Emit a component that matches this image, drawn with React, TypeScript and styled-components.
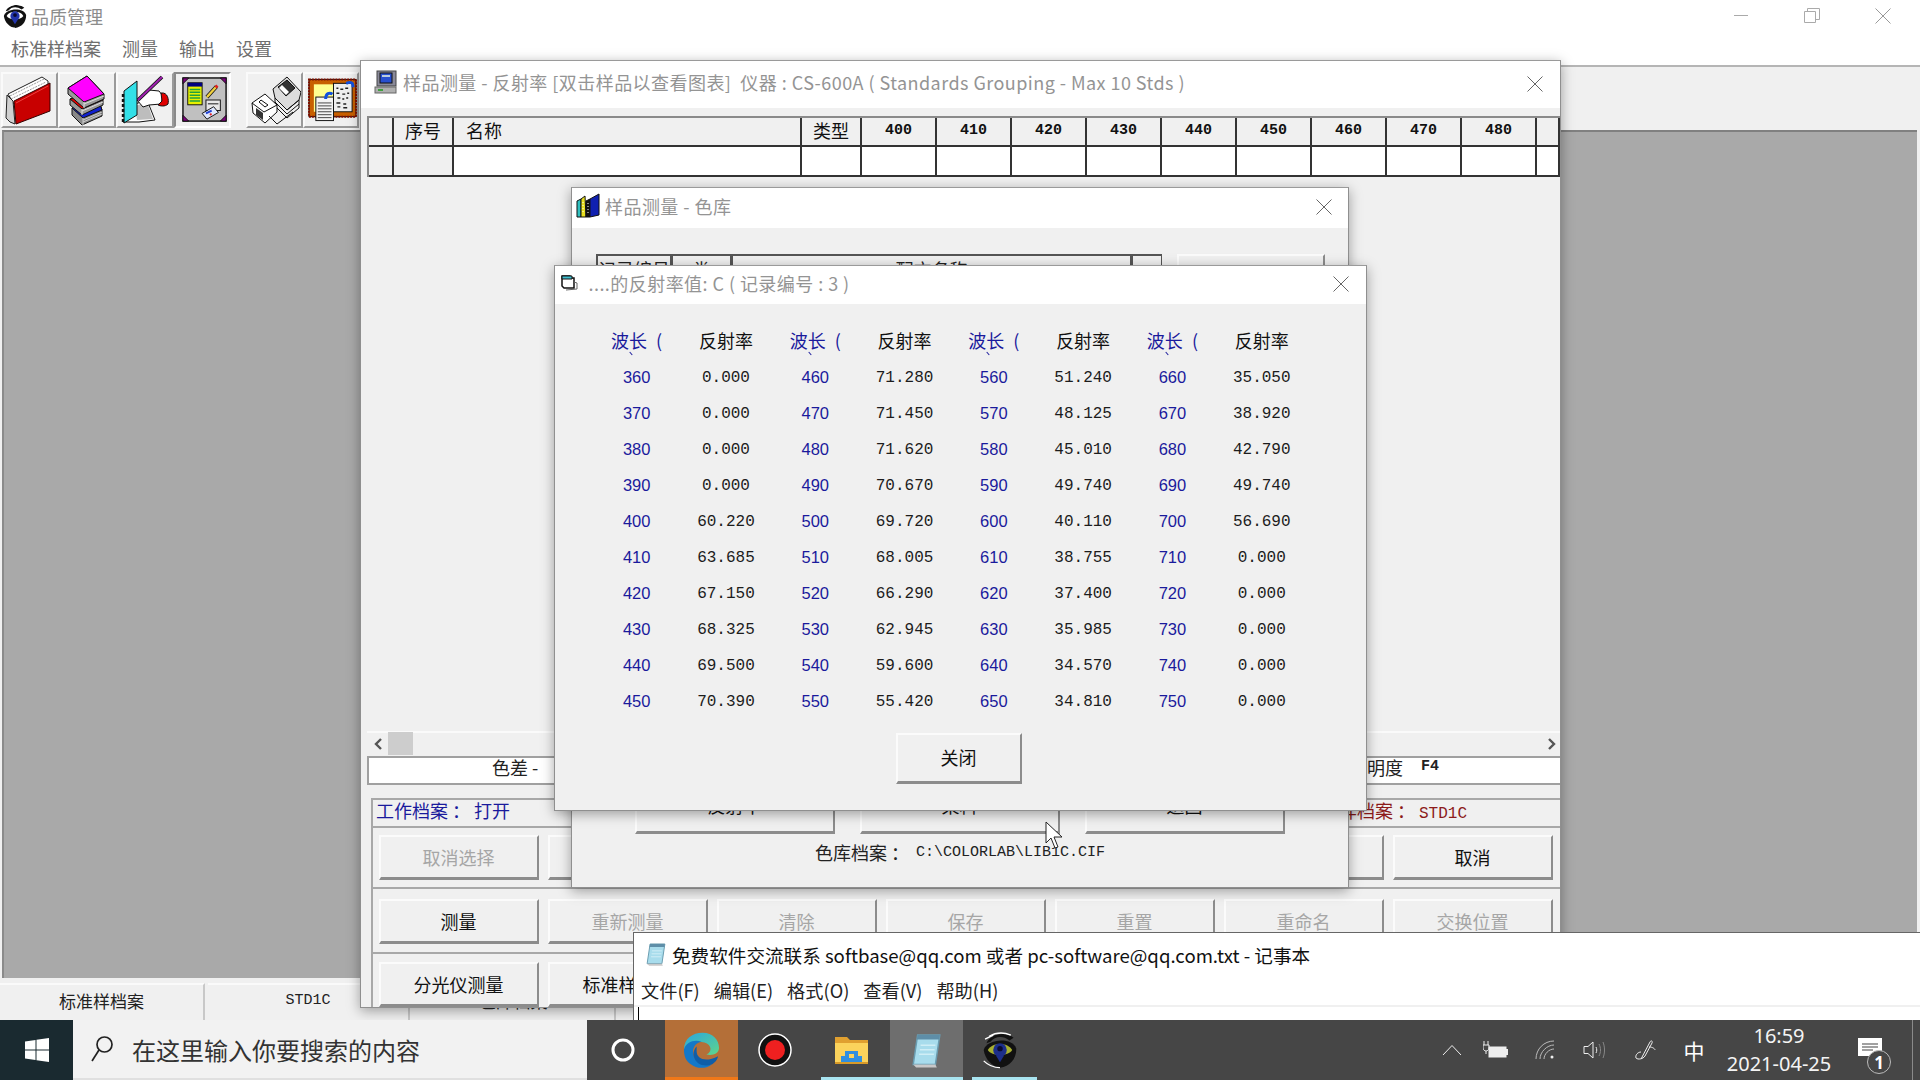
import React from "react";
import styled, { createGlobalStyle } from "styled-components";

const cjk = `"Noto Sans CJK SC", "Liberation Sans", sans-serif`;
const mono = `"Liberation Mono", "Noto Sans CJK SC", monospace`;

const Global = createGlobalStyle`
  html, body { margin: 0; padding: 0; background: #f0f0f0; overflow: hidden; }
  * { box-sizing: border-box; }
`;

const Screen = styled.div`
  position: relative; width: 1920px; height: 1080px; overflow: hidden;
  display: flex; flex-direction: column; background: #f0f0f0; font-family: ${cjk};
`;
const MainTitle = styled.div`
  height: 34px; background: #fff; display: flex; align-items: center; padding: 0 0 2px 2px; gap: 3px;
  font-size: 18px; color: #8c8c8c;
`;
const TitleText = styled.span`flex: 1;`;
const Caption = styled.div`display: flex; width: 212px; height: 32px; margin-right: 2px;`;
const CaptionBtn = styled.div`flex: 1; display: flex; align-items: center; justify-content: center;`;
const Menu = styled.div`
  height: 31px; background: #fff; display: flex; align-items: center; gap: 21px; padding: 0 0 2px 11px;
  font-size: 18px; color: #6e6e6e; border-bottom: 2px solid #fff;
`;
const Toolbar = styled.div`
  height: 65px; background: #f0f0f0; border-top: 2px solid #b5b5b5; display: flex; padding: 5px 0 0 1px; position: relative;
`;
const ToolBtn = styled.div<{ $w: number; $gap?: number; $down?: boolean; $pl?: number }>`
  width: ${p => p.$w}px; height: 56px; margin-left: ${p => p.$gap ?? 0}px; flex: none; padding-left: ${p => p.$pl ?? 0}px;
  border-style: solid;
  border-width: 2px 2px 2px 2px;
  border-color: ${p => p.$down ? "#8a8a8a #fff #fff #8a8a8a" : "#fafafa #9a9a9a #9a9a9a #fafafa"};
  display: flex; align-items: center; justify-content: center;
`;
const Mdi = styled.div`
  flex: 1; background: #a9a9a9; border-top: 2px solid #808080; border-left: 2px solid #8a8a8a; margin: 0 3px 0 2px;
`;
const StatusStrip = styled.div`
  height: 42px; padding-top: 5px; display: flex; background: #f0f0f0;
`;
const StatusCell = styled.div<{ $w: number; $mono?: boolean }>`
  width: ${p => p.$w}px; margin-right: 3px; border-top: 2px solid #fafafa; border-right: 2px solid #c8c8c8; flex: none;
  display: flex; align-items: center; justify-content: center; color: #222; padding-bottom: 4px;
  font: ${p => p.$mono ? `15px ${mono}` : `17px ${cjk}`};
`;

const Win = styled.div<{ $x: number; $y: number; $w: number; $h: number; $z: number }>`
  position: absolute; left: ${p => p.$x}px; top: ${p => p.$y}px; width: ${p => p.$w}px; height: ${p => p.$h}px; z-index: ${p => p.$z};
  background: #f0f0f0; border: 1px solid #8f8f8f; border-top-color: #9a9a9a; box-shadow: 0 3px 12px rgba(0,0,0,.35);
  display: flex; flex-direction: column; overflow: hidden;
`;
const WinTitle = styled.div<{ $h: number; $pad: number }>`
  height: ${p => p.$h}px; flex: none; background: #fff; display: flex; align-items: center; gap: 5px; padding-left: ${p => p.$pad}px;
  font-size: 18px; color: #949494; white-space: pre; letter-spacing: .45px; padding-bottom: 5px;
`;
const WinClose = styled.div<{ $r: number }>`margin-left: auto; margin-right: ${p => p.$r}px; display: flex; padding-top: 3px;`;

const Body1 = styled.div`flex: 1; display: flex; flex-direction: column; padding: 8px 0 0 6px; min-height: 0;`;
const SampleGrid = styled.div`
  display: grid; grid-template-columns: 25px 60px 348px 60px repeat(9, 75px) 1fr; flex: none;
  border-top: 2px solid #8a8a8a; border-left: 2px solid #8a8a8a;
`;
const Head = styled.div<{ $left?: boolean; $mono?: boolean }>`
  height: 29px; background: #f0f0f0; border-right: 2px solid #333; border-bottom: 2px solid #333;
  display: flex; align-items: center; justify-content: ${p => p.$left ? "flex-start" : "center"};
  padding: 0 0 3px ${p => p.$left ? 12 : 0}px; color: #111;
  font: ${p => p.$mono ? `bold 15px ${mono}` : `18px ${cjk}`};
`;
const Cell = styled.div<{ $gray?: boolean }>`
  height: 30px; background: ${p => p.$gray ? "#f0f0f0" : "#fff"}; border-right: 2px solid #333; border-bottom: 2px solid #333;
`;
const Flex1 = styled.div`flex: 1;`;
const HScroll = styled.div`
  height: 25px; flex: none; display: flex; align-items: center; padding: 0 4px 2px 7px; border-top: 2px solid #fafafa;
  font-size: 0; background: #f0f0f0;
`;
const Thumb = styled.div`width: 25px; height: 23px; background: #cdcdcd; margin-left: 5px;`;
const ReadRow = styled.div`
  height: 29px; flex: none; background: #fff; border: 2px solid #a0a0a0; border-right: none; display: flex; align-items: center; color: #222;
  font-size: 18px; padding: 0 0 8px 123px;
`;
const ReadRight = styled.span`margin-left: auto; margin-right: 121px; display: flex; align-items: center; gap: 18px;`;
const ReadMono = styled.span`font: bold 15px ${mono};`;
const Panel = styled.div`margin: 13px 0 0 4px; border-top: 2px solid #a8a8a8; border-left: 2px solid #a8a8a8; flex: none;`;
const FileRow = styled.div`
  height: 28px; display: flex; align-items: center; justify-content: space-between; padding: 0 93px 6px 3px; font-size: 18px;
  border-bottom: 2px solid #a8a8a8;
`;
const BlueLabel = styled.span`color: #1a1a9c;`;
const RedLabel = styled.span`color: #8c1a1a; font-size: 18px;`;
const RedMono = styled.span`font: 16px ${mono};`;
const BtnRow = styled.div<{ $pt: number; $pb: number; $line?: boolean }>`
  display: grid; grid-template-columns: repeat(7, 160px); column-gap: 9px; padding: ${p => p.$pt}px 0 ${p => p.$pb}px 6px;
  border-bottom: ${p => p.$line ? "2px solid #a8a8a8" : "none"};
`;
const Btn = styled.div<{ $off?: boolean; $h?: number }>`
  height: ${p => p.$h ?? 45}px; background: #f0f0f0; border-style: solid; border-color: #fbfbfb #8c8c8c #8c8c8c #fbfbfb; border-width: 2px 2px 3px 2px;
  display: flex; align-items: center; justify-content: center; font-size: 18px; padding-right: 1px; color: ${p => p.$off ? "#a6a6a6" : "#111"};
`;

const Body2 = styled.div`flex: 1; display: flex; flex-direction: column; padding-top: 26px;`;
const LibHeadRow = styled.div`display: flex; padding-left: 24px; height: 50px; flex: none;`;
const LibHead = styled.div<{ $w: number }>`
  width: ${p => p.$w}px; border: 2px solid #555; border-right-width: 1px; border-bottom: none; font-size: 18px; color: #222;
  display: flex; justify-content: center; line-height: 26px;
`;
const LibBtn = styled.div`
  width: 148px; height: 50px; margin-left: 15px; border-style: solid; border-color: #fbfbfb #8c8c8c #8c8c8c #fbfbfb; border-width: 2px;
`;
const LibBtns = styled.div`display: grid; grid-template-columns: repeat(3, 200px); column-gap: 25px; padding-left: 63px;`;
const LibBtnItem = styled(Btn)`padding-bottom: 7px;`;
const LibPath = styled.div`
  height: 53px; flex: none; display: flex; justify-content: center; align-items: flex-start; gap: 7px; padding: 5px 0 0 0; font-size: 18px; color: #222;
`;
const PathMono = styled.span`font: 15px/27px ${mono}; color: #222;`;

const DataGrid = styled.div`
  display: grid; grid-template-columns: repeat(8, 89.3px); padding: 18px 0 0 37px; flex: none;
`;
const DataHead = styled.div<{ $blue?: boolean }>`
  height: 37px; display: flex; align-items: center; justify-content: center; font-size: 18px; position: relative; padding-bottom: 2px;
  color: ${p => p.$blue ? "#1a1a9c" : "#111"}; white-space: pre; word-spacing: ${p => p.$blue ? 5 : 0}px;
  ${p => p.$blue ? `&::after { content: ""; position: absolute; left: 37px; top: 31px; width: 4px; height: 1px; background: #1a1a9c; transform: rotate(50deg); }` : ""}
`;
const DataWave = styled.div`
  height: 36px; display: flex; align-items: center; justify-content: center; color: #1a1a9c; font: 16.5px "Liberation Sans", sans-serif;
`;
const DataValue = styled.div`
  height: 36px; display: flex; align-items: center; justify-content: center; padding-top: 1px; color: #1c1c1c; font: 16px ${mono};
`;
const CloseRow = styled.div`display: flex; justify-content: center; padding: 14px 3px 0 0;`;
const CloseBtn = styled(Btn)`width: 126px; height: 51px; padding-bottom: 2px;`;

const Notepad = styled.div`
  position: absolute; left: 633px; top: 932px; right: 0; height: 88px; background: #fff; z-index: 5;
  border-top: 1px solid #666; border-left: 1px solid #666; display: flex; flex-direction: column;
`;
const NoteTitle = styled.div`
  height: 42px; display: flex; align-items: center; gap: 5px; padding-left: 11px; font-size: 18.6px; color: #111; flex: none;
`;
const NoteMenu = styled.div`
  height: 30px; display: flex; align-items: center; gap: 14px; padding-left: 7px; font-size: 18.2px; color: #222; flex: none;
`;
const NoteEdit = styled.div`flex: 1; border-top: 2px solid #f0f0f0; padding-left: 4px;`;
const Caret = styled.div`width: 1px; height: 13px; background: #000;`;

const Taskbar = styled.div`
  height: 60px; flex: none; background: #464646; display: flex; align-items: stretch; position: relative; z-index: 6; color: #fff;
`;
const StartTile = styled.div`width: 73px; background: #1a2a30; display: flex; align-items: center; justify-content: center;`;
const SearchBox = styled.div`
  width: 514px; background: #f2f2f2; border-bottom: 2px solid #e0e0e0; display: flex; align-items: center; gap: 18px; padding-left: 17px;
  font-size: 24px; color: #333;
`;
const TaskTile = styled.div<{ $w: number; $bg?: string; $line?: string; $inset?: number; $shift?: number }>`
  width: ${p => p.$w}px; flex: none; background: ${p => p.$bg ?? "transparent"}; position: relative;
  display: flex; align-items: center; justify-content: center; padding: 0 ${p => p.$shift ?? 0}px 0 0;
  ${p => p.$line ? `&::after { content: ""; position: absolute; left: ${p.$inset ?? 0}px; right: 0; bottom: 0; height: 3px; background: ${p.$line}; }` : ""}
`;
const Tray = styled.div`margin-left: auto; display: flex; align-items: center;`;
const TraySlot = styled.div<{ $w: number }>`width: ${p => p.$w}px; display: flex; justify-content: center; align-items: center; flex: none;`;
const ImeGlyph = styled.span`font-size: 21px; color: #fff;`;
const Clock = styled.div`
  width: 126px; display: flex; flex-direction: column; align-items: center; font: 20px/28px "Noto Sans", sans-serif; color: #f4f4f4;
`;
const Notify = styled.div`width: 56px; height: 60px; margin-right: 14px; position: relative; display: flex; align-items: center; justify-content: center;`;
const NotifyBadge = styled.div`
  position: absolute; left: 25px; top: 30px; width: 24px; height: 24px; border-radius: 50%; background: #464646; border: 1px solid #bbb;
  display: flex; align-items: center; justify-content: center; font: bold 17px "Noto Sans", sans-serif; color: #fff;
`;
const TrayEdge = styled.div`width: 8px; height: 60px; border-left: 1px solid #8a8a8a;`;
const Cursor = styled.div`position: absolute; left: 1045px; top: 821px; z-index: 9; display: flex;`;
const ScrollEnd = styled.div`margin-left: auto; display: flex;`;

const CloseX = ({ size = 16, color = "#666" }: { size?: number; color?: string }) => (
  <svg width={size} height={size} viewBox="0 0 16 16"><path d="M0.5 0.5 15.5 15.5M15.5 0.5 0.5 15.5" stroke={color} strokeWidth="1" fill="none" /></svg>
);

const EyeLogo = ({ size = 26, taskbar = false }: { size?: number; taskbar?: boolean }) => (
  <svg width={size} height={size} viewBox="0 0 26 28">
    <path d="M3 9 C6 2 17 0 23 5 L20 7 C15 3 9 4 6 8Z" fill="#111" />
    <path d="M1 14 C3 6 22 4 25 13 C25 21 20 26 13 27 C7 26 2 21 1 14Z" fill="#111" />
    <path d="M4 14 C7 8 19 8 22 14 C19 19 7 19 4 14Z" fill={taskbar ? "#a8b030" : "#fff"} />
    <circle cx="13" cy="14" r="5" fill={taskbar ? "#1d2f8a" : "#2233aa"} />
    <path d="M10 18 L13 23 L16 18Z" fill={taskbar ? "#1d2f8a" : "#2233aa"} />
    <circle cx="13" cy="13" r="2" fill="#0a0a30" />
    <path d="M2 6 L8 3 M1 22 C5 26 9 27 13 27 M5 4 C10 1 16 1 21 3" stroke="#fff" strokeWidth="1" fill="none" />
  </svg>
);

const IconBook = () => (
  <svg width="52" height="52" viewBox="0 0 52 52">
    <path d="M4 20 L38 3 L44 7 L44 13 L10 30 Z" fill="#fff" stroke="#222" strokeWidth="1" />
    <path d="M6 22 L40 5 M7 25 L42 8" stroke="#999" strokeWidth="1" strokeDasharray="2 1" />
    <path d="M3 21 L9 27 L11 50 L6 48 L2 44 Z" fill="#d0d0d0" stroke="#222" strokeWidth="1" />
    <path d="M10 27 L46 9 L46 37 L12 50 Z" fill="#c80000" stroke="#300" strokeWidth="1" />
    <path d="M12 29 L44 12" stroke="#f04040" strokeWidth="1" />
  </svg>
);
const IconStack = () => (
  <svg width="52" height="52" viewBox="0 0 52 52">
    <path d="M11 34 L38 27 L41 36 L41 42 L21 51 L11 41Z" fill="#888" stroke="#111" />
    <path d="M11 34 L22 44 L41 36 L38 27Z" fill="#1020d0" stroke="#111" />
    <path d="M22 44 L22 51 M22 46 L41 38 M22 48 L41 40" stroke="#ccc" />
    <path d="M9 25 L36 17 L42 26 L42 31 L21 41 L9 31Z" fill="#999" stroke="#111" />
    <path d="M9 25 L21 35 L42 26 L36 17Z" fill="#e00000" stroke="#111" />
    <path d="M21 35 L21 41 M21 37 L42 28" stroke="#ddd" />
    <path d="M7 14 L26 2 L43 20 L43 25 L23 34 L7 20Z" fill="#9a9a9a" stroke="#111" />
    <path d="M7 14 L23 28 L43 20 L26 2Z" fill="#ff00ff" stroke="#111" />
    <path d="M23 28 L23 34 M23 30 L43 22" stroke="#ddd" />
  </svg>
);
const IconNote = () => (
  <svg width="52" height="52" viewBox="0 0 52 52">
    <path d="M4 48 L20 48 L36 46 L28 26 L16 30Z" fill="#fff" stroke="#111" />
    <path d="M16 32 L28 28 L34 45 L18 46Z" fill="#bdbdbd" />
    <path d="M5 17 L18 7 L18 41 L5 49Z" fill="#33e0e8" stroke="#111" />
    <path d="M4 20v3M4 25v3M4 30v3M4 35v3M4 40v3M4 45v3" stroke="#111" strokeWidth="2.4" />
    <path d="M18 26 L30 16 L40 17 L44 22 L42 30 L30 31 L24 33Z" fill="#fff" stroke="#111" />
    <path d="M42 19 C49 18 50 26 49 30 C46 33 41 32 39 31 L43 27Z" fill="#e00000" stroke="#111" />
    <path d="M19 26 L43 3" stroke="#111" strokeWidth="3.6" />
    <path d="M19 26 L43 3" stroke="#a020b0" strokeWidth="2" />
  </svg>
);
const IconPanel = () => (
  <svg width="46" height="46" viewBox="0 0 48 48">
    <rect x="1" y="1" width="45" height="45" fill="#c0c0c0" stroke="#111" strokeWidth="1.5" />
    <path d="M1 1 L7 1 L1 7Z M46 1 L40 1 L46 7Z M1 46 L7 46 L1 40Z M46 46 L40 46 L46 40Z" fill="#800080" stroke="#111" />
    <rect x="6" y="6" width="15" height="23" fill="#e8f000" stroke="#111" />
    <rect x="6" y="6" width="15" height="4" fill="#000080" />
    <path d="M8 13h11M8 16h11M8 19h11M8 22h11M8 25h11" stroke="#20a040" strokeWidth="1.5" />
    <path d="M26 21 L36 10" stroke="#111" strokeWidth="4" />
    <path d="M26 21 L36 10" stroke="#f0d040" strokeWidth="2.4" />
    <path d="M35 11 L37 9" stroke="#e02020" strokeWidth="3" />
    <rect x="25" y="24" width="15" height="11" fill="#e8e8e8" stroke="#111" />
    <path d="M27 28h11" stroke="#111" />
    <path d="M21 38 L33 31 L38 37 L26 44Z" fill="#dfe8ff" stroke="#111" />
    <path d="M25 38 L31 35" stroke="#2040d0" strokeWidth="2" />
    <circle cx="30" cy="39" r="1.2" fill="#e02020" />
  </svg>
);
const IconMachines = () => (
  <svg width="52" height="52" viewBox="0 0 52 52">
    <path d="M24 15 L38 3 L52 18 L50 26 L38 36 L26 24Z" fill="#dcdcdc" stroke="#111" />
    <path d="M29 13 L38 6 L46 14 L37 22Z" fill="#333" stroke="#111" />
    <path d="M30 14 L33 11 L40 18 L37 21Z" fill="#fff" />
    <path d="M26 24 L38 36 L50 26 M26 28 L38 40 L50 30 M26 24v8 L38 44 L50 34 V26" fill="none" stroke="#111" />
    <path d="M3 29 L16 20 L28 31 L28 38 L16 49 L4 39Z" fill="#fff" stroke="#111" />
    <path d="M3 29 L15 38 L28 31" fill="none" stroke="#111" />
    <path d="M7 34 L14 39 L14 46 L7 41Z" fill="#333" />
    <path d="M12 26 L19 31 L16 33 L10 28Z" fill="none" stroke="#111" />
    <path d="M20 42 L28 50 L44 38" fill="none" stroke="#111" />
  </svg>
);
const IconBoard = () => (
  <svg width="50" height="50" viewBox="0 0 50 50">
    <rect x="1" y="4" width="48" height="38" fill="#c86000" stroke="#111" />
    <rect x="1" y="4" width="48" height="38" fill="none" stroke="#801000" strokeWidth="2" strokeDasharray="2 1" />
    <rect x="6" y="9" width="38" height="28" fill="#ffff90" />
    <rect x="26" y="8" width="19" height="29" fill="#eee" stroke="#111" />
    <path d="M29 13h2M33 14h3M38 13h3M29 18h3M35 19h3M40 18h2M30 23h3M35 24h2M39 23h2M29 28h4M36 29h3M30 32h3M36 33h4" stroke="#222" strokeWidth="1.5" />
    <rect x="8" y="22" width="18" height="24" fill="#f4f4f4" stroke="#111" />
    <path d="M10 28h14M10 31h14M10 34h14M10 37h14M10 40h14M10 43h14" stroke="#444" />
    <path d="M18 24 C18 18 22 17 25 19" stroke="#1050e0" strokeWidth="3" fill="none" />
    <path d="M39 8 C44 6 46 7 46 12" stroke="#1050e0" strokeWidth="3" fill="none" />
  </svg>
);
const IconMonitor = () => (
  <svg width="24" height="24" viewBox="0 0 24 24">
    <rect x="3" y="1" width="19" height="15" fill="#8a8a9a" stroke="#444" />
    <rect x="6" y="3" width="12" height="10" fill="#2850d0" stroke="#111" />
    <rect x="8" y="5" width="8" height="2" fill="#bcd" />
    <rect x="1" y="17" width="21" height="6" fill="#b0b0b0" stroke="#666" />
    <rect x="4" y="19" width="5" height="2" fill="#40a040" />
  </svg>
);
const IconLib = () => (
  <svg width="24" height="26" viewBox="0 0 24 26">
    <path d="M1 8 L5 6 L5 24 L1 24Z" fill="#30c0c0" stroke="#111" />
    <path d="M5 6 L9 3 L10 24 L5 24Z" fill="#e8e020" stroke="#111" />
    <path d="M10 8 L14 6 L14 24 L10 24Z" fill="#111" stroke="#111" />
    <path d="M14 6 L23 1 L23 22 L14 24Z" fill="#1020b0" stroke="#111" />
    <path d="M7 9v12M12 10v12" stroke="#fff" strokeDasharray="1 2" />
  </svg>
);
const IconSmallWin = () => (
  <svg width="18" height="18" viewBox="0 0 18 18">
    <path d="M1 2 H9 L11 4 H13 V14 H3 L1 12Z" fill="#fff" stroke="#111" strokeWidth="1.5" />
    <path d="M1 2 H11 V5 H1Z" fill="#40c0d0" stroke="#111" />
    <path d="M13 8 L16 9 L16 15 L5 16" fill="none" stroke="#666" />
  </svg>
);
const IconNotepad = ({ size = 22 }: { size?: number }) => (
  <svg width={size} height={size * 1.12} viewBox="0 0 22 25">
    <path d="M5 2 L20 2 L17 22 L2 22Z" fill="#a8dcec" stroke="#6a9cb0" />
    <path d="M5 2 L20 2 L19.5 5 L4.5 5Z" fill="#5e8ea8" />
    <path d="M4 24 L18 24 L17 22 L2 22Z" fill="#c8c8c8" />
    <path d="M7 9h10M6.5 12h10M6 15h10" stroke="#d0eef6" />
  </svg>
);
const WinLogo = () => (
  <svg width="24" height="24" viewBox="0 0 24 24" fill="#fff">
    <path d="M0 3.5 L10.5 2 V11.5 H0Z M11.5 1.8 L24 0 V11.5 H11.5Z M0 12.5 H10.5 V22 L0 20.5Z M11.5 12.5 H24 V24 L11.5 22.2Z" />
  </svg>
);
const SearchGlass = () => (
  <svg width="24" height="28" viewBox="0 0 24 28" fill="none" stroke="#222" strokeWidth="1.7">
    <circle cx="14.5" cy="9.5" r="7.5" />
    <path d="M9 15 L2 26" />
  </svg>
);
const EdgeIcon = () => (
  <svg width="37" height="37" viewBox="0 0 38 46" preserveAspectRatio="none">
    <defs>
      <linearGradient id="eg" x1="0" y1="0" x2="1" y2="1"><stop offset="0" stopColor="#2aa6e0" /><stop offset="1" stopColor="#5fd68a" /></linearGradient>
    </defs>
    <path d="M1 22 C1 8 10 1 20 1 C31 1 37 10 37 20 C37 27 30 30 24 28 C30 25 30 16 22 13 C13 10 5 14 1 22Z" fill="url(#eg)" />
    <path d="M1 22 C3 12 12 9 19 12 C11 14 9 22 11 30 C14 40 24 43 30 40 C24 46 14 46 8 40 C3 36 1 30 1 22Z" fill="#1478c8" />
    <path d="M14 24 C14 34 24 38 36 30 C35 36 32 38 30 40 C22 44 13 40 11 30 C10 26 12 20 14 18Z" fill="#0f5ea8" />
  </svg>
);
const RecordIcon = () => (
  <svg width="34" height="34" viewBox="0 0 34 34">
    <circle cx="17" cy="17" r="16" fill="#111" stroke="#fff" strokeWidth="1.5" />
    <circle cx="17" cy="17" r="10" fill="#ef2020" />
  </svg>
);
const FolderIcon = () => (
  <svg width="33" height="28" viewBox="0 0 33 28">
    <path d="M0 1 H12 L15 4 H33 V9 H0Z" fill="#e0a030" />
    <rect x="0" y="7" width="33" height="19" fill="#fbd35c" />
    <path d="M10 15 H23 V20 H27 V26 H6 V20 H10Z" fill="#2f8fe0" />
    <rect x="14" y="18" width="5" height="4" fill="#fbd35c" />
    <rect x="0" y="26" width="33" height="2" fill="#d89a28" />
  </svg>
);
const TrayChevron = () => <svg width="20" height="12" viewBox="0 0 20 12" fill="none" stroke="#eee"><path d="M1 11 L10 1.5 L19 11" /></svg>;
const TrayBattery = () => (
  <svg width="26" height="20" viewBox="0 0 26 20" fill="none" stroke="#eee">
    <path d="M1 1v4M5 1v4M0 5h6v3c0 2-2 3-3 3s-3-1-3-3z" />
    <path d="M3 11v3" />
    <rect x="6" y="7" width="17" height="10" fill="#eee" />
    <path d="M24 9v6" strokeWidth="2" />
  </svg>
);
const TrayWifi = () => (
  <svg width="22" height="20" viewBox="0 0 22 20" fill="none" stroke="#bbb">
    <path d="M1 19 C1 9 9 1 19 1M5 19 C5 12 12 5 19 5M9 19 C9 14 14 9 19 9" />
    <circle cx="17" cy="17" r="1.5" fill="#eee" stroke="none" />
  </svg>
);
const TrayVolume = () => (
  <svg width="24" height="20" viewBox="0 0 24 20" fill="none" stroke="#eee">
    <path d="M1 6.5h4L10 2v16l-5-4.5H1z" />
    <path d="M13 7c1 2 1 4 0 6" />
    <path d="M16 4c2 4 2 8 0 12M20 2c2 5 2 11 0 16" stroke="#888" />
  </svg>
);
const TrayPen = () => (
  <svg width="22" height="22" viewBox="0 0 22 22" fill="none" stroke="#eee">
    <path d="M6 20 L15 3 C16 1 18 2 17 4 L10 17 C8 20 3 21 1 19 C0 16 3 13 6 13" />
    <path d="M14 8 C18 8 20 10 20 11" />
  </svg>
);
const NotifyIcon = () => (
  <svg width="26" height="26" viewBox="0 0 26 26">
    <path d="M1 1 H25 V19 H16 L12 24 V19 H1Z" fill="#fff" />
    <path d="M5 7 H21 M5 10 H21 M5 13 H16" stroke="#444" strokeWidth="1.2" />
  </svg>
);
const ArrowL = () => <svg width="9" height="12" viewBox="0 0 9 12" fill="none" stroke="#555" strokeWidth="2.4"><path d="M7 1 L2 6 L7 11" /></svg>;
const ArrowR = () => <svg width="9" height="12" viewBox="0 0 9 12" fill="none" stroke="#555" strokeWidth="2.4"><path d="M2 1 L7 6 L2 11" /></svg>;

const columns: [number, string[]][] = [
  [360, ["0.000", "0.000", "0.000", "0.000", "60.220", "63.685", "67.150", "68.325", "69.500", "70.390"]],
  [460, ["71.280", "71.450", "71.620", "70.670", "69.720", "68.005", "66.290", "62.945", "59.600", "55.420"]],
  [560, ["51.240", "48.125", "45.010", "49.740", "40.110", "38.755", "37.400", "35.985", "34.570", "34.810"]],
  [660, ["35.050", "38.920", "42.790", "49.740", "56.690", "0.000", "0.000", "0.000", "0.000", "0.000"]],
];
const waves = ["400", "410", "420", "430", "440", "450", "460", "470", "480"];

export default function App() {
  return (
    <Screen>
      <Global />
      <MainTitle>
        <EyeLogo />
        <TitleText>品质管理</TitleText>
        <Caption>
          <CaptionBtn><svg width="14" height="2"><path d="M0 .5H14" stroke="#aaa" /></svg></CaptionBtn>
          <CaptionBtn><svg width="16" height="16" fill="none" stroke="#aaa"><path d="M.5 3.5h11v11H.5zM3.5 3.5V.5h12v11h-4" /></svg></CaptionBtn>
          <CaptionBtn><CloseX color="#999" /></CaptionBtn>
        </Caption>
      </MainTitle>
      <Menu><span>标准样档案</span><span>测量</span><span>输出</span><span>设置</span></Menu>
      <Toolbar>
        <ToolBtn $w={57}><IconBook /></ToolBtn>
        <ToolBtn $w={58}><IconStack /></ToolBtn>
        <ToolBtn $w={58}><IconNote /></ToolBtn>
        <ToolBtn $w={57} $down $pl={5}><IconPanel /></ToolBtn>
        <ToolBtn $w={57} $gap={15}><IconMachines /></ToolBtn>
        <ToolBtn $w={56} $pl={3}><IconBoard /></ToolBtn>
      </Toolbar>
      <Mdi />
      <StatusStrip>
        <StatusCell $w={205}>标准样档案</StatusCell>
        <StatusCell $w={202} $mono>STD1C</StatusCell>
        <StatusCell $w={203}>色库档案</StatusCell>
      </StatusStrip>
      <Taskbar>
        <StartTile><WinLogo /></StartTile>
        <SearchBox><SearchGlass /><span>在这里输入你要搜索的内容</span></SearchBox>
        <TaskTile $w={78} $shift={6}><svg width="24" height="24" viewBox="0 0 24 24" fill="none"><circle cx="12" cy="12" r="10" stroke="#fff" strokeWidth="3" /></svg></TaskTile>
        <TaskTile $w={73} $bg="#b46f38" $line="#f07818"><EdgeIcon /></TaskTile>
        <TaskTile $w={74}><RecordIcon /></TaskTile>
        <TaskTile $w={78} $line="#a8e4f0" $inset={9}><FolderIcon /></TaskTile>
        <TaskTile $w={73} $bg="#6e6e6e" $line="#a8e4f0"><IconNotepad size={33} /></TaskTile>
        <TaskTile $w={74} $line="#a8e4f0" $inset={9}><EyeLogo size={38} taskbar /></TaskTile>
        <Tray>
          <TraySlot $w={36}><TrayChevron /></TraySlot>
          <TraySlot $w={52}><TrayBattery /></TraySlot>
          <TraySlot $w={48}><TrayWifi /></TraySlot>
          <TraySlot $w={50}><TrayVolume /></TraySlot>
          <TraySlot $w={52}><TrayPen /></TraySlot>
          <TraySlot $w={44}><ImeGlyph>中</ImeGlyph></TraySlot>
          <Clock><span>16:59</span><span>2021-04-25</span></Clock>
          <Notify><NotifyIcon /><NotifyBadge>1</NotifyBadge></Notify>
          <TrayEdge />
        </Tray>
      </Taskbar>

      <Win $x={360} $y={60} $w={1201} $h={948} $z={1}>
        <WinTitle $h={47} $pad={13}>
          <IconMonitor />
          <span>样品测量 - 反射率 [双击样品以查看图表]  仪器 : CS-600A ( Standards Grouping - Max 10 Stds )</span>
          <WinClose $r={17}><CloseX /></WinClose>
        </WinTitle>
        <Body1>
          <SampleGrid>
            <Head />
            <Head>序号</Head>
            <Head $left>名称</Head>
            <Head>类型</Head>
            {waves.map(w => <Head key={w} $mono>{w}</Head>)}
            <Head />
            <Cell $gray />
            <Cell $gray />
            <Cell />
            <Cell />
            {waves.map(w => <Cell key={w} />)}
            <Cell />
          </SampleGrid>
          <Flex1 />
          <HScroll>
            <ArrowL />
            <Thumb />
            <ScrollEnd><ArrowR /></ScrollEnd>
          </HScroll>
          <ReadRow>
            <span>色差 -</span>
            <ReadRight><span>透明度</span><ReadMono>F4</ReadMono></ReadRight>
          </ReadRow>
          <Panel>
            <FileRow>
              <BlueLabel>工作档案 ： 打开</BlueLabel>
              <RedLabel>标准样档案 ： <RedMono>STD1C</RedMono></RedLabel>
            </FileRow>
            <BtnRow $pt={7} $pb={7} $line>
              <Btn $off>取消选择</Btn><Btn $off /><Btn $off /><Btn $off /><Btn $off /><Btn $off /><Btn>取消</Btn>
            </BtnRow>
            <BtnRow $pt={10} $pb={8} $line>
              <Btn>测量</Btn><Btn $off>重新测量</Btn><Btn $off>清除</Btn><Btn $off>保存</Btn><Btn $off>重置</Btn><Btn $off>重命名</Btn><Btn $off>交换位置</Btn>
            </BtnRow>
            <BtnRow $pt={8} $pb={0}>
              <Btn>分光仪测量</Btn><Btn>标准样测量</Btn>
            </BtnRow>
          </Panel>
        </Body1>
      </Win>

      <Win $x={571} $y={187} $w={778} $h={701} $z={2}>
        <WinTitle $h={40} $pad={4}>
          <IconLib />
          <span>样品测量 - 色库</span>
          <WinClose $r={16}><CloseX /></WinClose>
        </WinTitle>
        <Body2>
          <LibHeadRow>
            <LibHead $w={75}>记录编号</LibHead>
            <LibHead $w={60}>类</LibHead>
            <LibHead $w={400}>配方名称</LibHead>
            <LibHead $w={31} />
            <LibBtn />
          </LibHeadRow>
          <Flex1 />
          <LibBtns>
            <LibBtnItem $h={50}>反射率</LibBtnItem><LibBtnItem $h={50}>染料</LibBtnItem><LibBtnItem $h={50}>返回</LibBtnItem>
          </LibBtns>
          <LibPath><span>色库档案 ：</span><PathMono>C:\COLORLAB\LIB1C.CIF</PathMono></LibPath>
        </Body2>
      </Win>

      <Win $x={554} $y={265} $w={813} $h={546} $z={3}>
        <WinTitle $h={38} $pad={6}>
          <IconSmallWin />
          <span> ....的反射率值: C ( 记录编号 : 3 )</span>
          <WinClose $r={17}><CloseX /></WinClose>
        </WinTitle>
        <DataGrid>
          {columns.map(([s]) => (
            <React.Fragment key={s}>
              <DataHead $blue>波长 (</DataHead>
              <DataHead>反射率</DataHead>
            </React.Fragment>
          ))}
          {columns[0][1].map((_, r) =>
            columns.map(([s, vals]) => (
              <React.Fragment key={`${s}-${r}`}>
                <DataWave>{s + r * 10}</DataWave>
                <DataValue>{vals[r]}</DataValue>
              </React.Fragment>
            ))
          )}
        </DataGrid>
        <CloseRow><CloseBtn>关闭</CloseBtn></CloseRow>
      </Win>

      <Notepad>
        <NoteTitle>
          <IconNotepad />
          <span>免费软件交流联系 softbase@qq.com 或者 pc-software@qq.com.txt - 记事本</span>
        </NoteTitle>
        <NoteMenu><span>文件(F)</span><span>编辑(E)</span><span>格式(O)</span><span>查看(V)</span><span>帮助(H)</span></NoteMenu>
        <NoteEdit><Caret /></NoteEdit>
      </Notepad>

      <Cursor>
        <svg width="19" height="28" viewBox="0 0 19 28"><path d="M1 1 L1 22 L6 17 L10 27 L13 26 L9 16 L17 16 Z" fill="#fff" stroke="#222" /></svg>
      </Cursor>
    </Screen>
  );
}
